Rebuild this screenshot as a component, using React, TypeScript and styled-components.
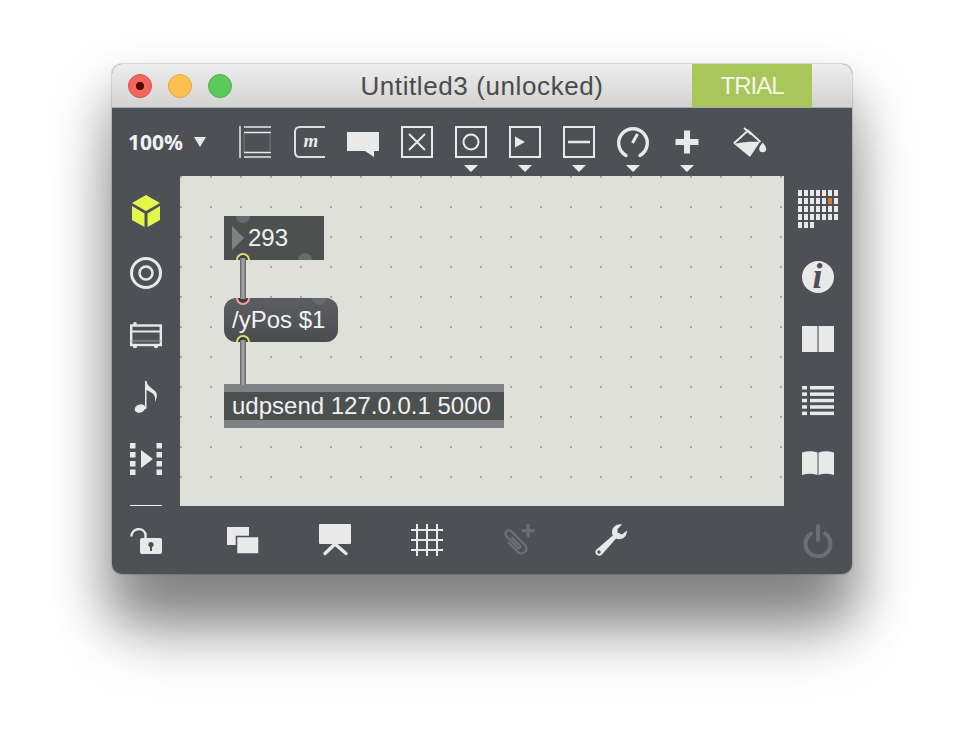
import styled, { createGlobalStyle } from "styled-components";

const Page = createGlobalStyle`
  html, body { margin: 0; background: #fff; }
  body { width: 964px; height: 734px; overflow: hidden; }
`;

const ICON = "#e9e9e9";
const DIM = "#6b6e72";
const PANEL = "#4d5055";

const Window = styled.div`
  width: 740px;
  height: 510px;
  margin: 64px 0 0 112px;
  display: flex;
  flex-direction: column;
  border-radius: 10px;
  overflow: hidden;
  background: ${PANEL};
  box-shadow: 0 68px 60px -10px rgba(0, 0, 0, 0.3), 0 34px 50px 10px rgba(0, 0, 0, 0.28),
    0 0 1px 1px rgba(0, 0, 0, 0.14);
`;

const TitleBar = styled.div`
  height: 44px;
  box-sizing: border-box;
  display: grid;
  grid-template-columns: 1fr auto 1fr;
  align-items: center;
  background: linear-gradient(#ededed, #d3d3d3);
  border-bottom: 1px solid #ababab;
`;

const Lights = styled.div`
  display: flex;
  gap: 16px;
  padding-left: 16px;
`;

const Light = styled.div<{ $fill: string; $edge: string }>`
  width: 24px;
  height: 24px;
  box-sizing: border-box;
  border-radius: 50%;
  background: ${(p) => p.$fill};
  border: 1px solid ${(p) => p.$edge};
  display: flex;
  align-items: center;
  justify-content: center;
`;

const CloseDot = styled.div`
  width: 8px;
  height: 8px;
  border-radius: 50%;
  background: #4f0a06;
`;

const Title = styled.div`
  margin-top: 1px;
  font: 26px "Liberation Sans", Arial, sans-serif;
  letter-spacing: 0.6px;
  color: #4b4b4b;
  white-space: nowrap;
`;

const TrialBadge = styled.div`
  justify-self: end;
  align-self: start;
  width: 120px;
  height: 43px;
  margin-right: 40px;
  background: #a8c65a;
  color: #f4f7e6;
  font: 24px "Liberation Sans", Arial, sans-serif;
  letter-spacing: -1px;
  line-height: 43px;
  text-align: center;
`;

const Toolbar = styled.div`
  height: 68px;
  box-sizing: border-box;
  display: flex;
  align-items: flex-start;
  padding: 18px 0 0 16px;
`;

const Zoom = styled.div`
  display: flex;
  align-items: center;
  height: 32px;
  width: 111px;
  gap: 11px;
  font: bold 21px "Open Sans", "Liberation Sans", sans-serif;
  letter-spacing: 0;
  color: #f1f1f1;
`;

const ZoomCaret = styled.div`
  width: 0;
  height: 0;
  border-left: 6px solid transparent;
  border-right: 6px solid transparent;
  border-top: 10px solid #e9e9e9;
`;

const Tools = styled.div`
  display: flex;
  gap: 22px;
`;

const Tool = styled.div`
  display: flex;
  flex-direction: column;
  align-items: center;
  width: 32px;
  gap: 7px;
`;

const BucketTool = styled(Tool)`
  margin-left: 8px;
`;

const MenuCaret = styled.div`
  width: 0;
  height: 0;
  border-left: 7px solid transparent;
  border-right: 7px solid transparent;
  border-top: 7px solid #ededed;
`;

const Middle = styled.div`
  height: 330px;
  display: flex;
`;

const Rail = styled.div<{ $top: number }>`
  width: 68px;
  flex: none;
  box-sizing: border-box;
  padding-top: ${(p) => p.$top}px;
  display: flex;
  flex-direction: column;
  align-items: center;
  gap: 30px;
`;

const Slot = styled.div`
  width: 32px;
  height: 32px;
  display: flex;
  align-items: center;
  justify-content: center;
`;

const GridSlot = styled.div`
  width: 40px;
  height: 38px;
  margin-bottom: 3px;
`;

const RailRule = styled.div`
  width: 32px;
  height: 1px;
  flex: none;
  margin-top: auto;
  background: #f0f0f0;
`;

const Canvas = styled.div`
  position: relative;
  width: 604px;
  flex: none;
  background-color: #dfe0da;
  background-image: radial-gradient(circle at 1px 1px, #a9aaa4 1px, transparent 1.4px);
  background-size: 30px 30px;
`;

const Box = styled.div<{ $x: number; $y: number; $w: number; $round?: boolean }>`
  position: absolute;
  left: ${(p) => p.$x}px;
  top: ${(p) => p.$y}px;
  width: ${(p) => p.$w}px;
  height: 44px;
  box-sizing: border-box;
  overflow: hidden;
  display: flex;
  align-items: center;
  padding-left: 8px;
  background: ${(p) => (p.$round ? "linear-gradient(#5d5e63, #4a4d4d)" : "#4c504e")};
  border-radius: ${(p) => (p.$round ? "12px" : "0")};
  font: 24px "Liberation Sans", Arial, sans-serif;
  color: #f1f2f4;
  white-space: nowrap;
`;

const ObjectBox = styled(Box)`
  border-top: 8px solid #808185;
  border-bottom: 8px solid #808185;
`;

const NumberArrow = styled.div`
  width: 0;
  height: 0;
  margin-right: 4px;
  border-top: 12px solid transparent;
  border-bottom: 12px solid transparent;
  border-left: 12px solid #7e8184;
`;

const Bump = styled.div<{ $x: number; $bottom?: boolean }>`
  position: absolute;
  left: ${(p) => p.$x}px;
  ${(p) => (p.$bottom ? "bottom: -7px;" : "top: -7px;")}
  width: 14px;
  height: 14px;
  border-radius: 50%;
  background: #686b6d;
`;

const Port = styled.div<{ $out?: boolean; $inset?: number }>`
  position: absolute;
  left: 12px;
  ${(p) => (p.$out ? "bottom" : "top")}: ${(p) => -7 - (p.$inset ?? 0)}px;
  width: 14px;
  height: 14px;
  box-sizing: border-box;
  border-radius: 50%;
  background: #3c3f3f;
  border: 2px solid ${(p) => (p.$out ? "#dfe06e" : "#f0a594")};
`;

const Wire = styled.div<{ $y: number; $h: number }>`
  position: absolute;
  left: 60px;
  top: ${(p) => p.$y}px;
  width: 6px;
  height: ${(p) => p.$h}px;
  background: linear-gradient(to right, #5a5c5c, #9f9f9f 35%, #9f9f9f 65%, #5a5c5c);
`;

const BottomBar = styled.div`
  height: 68px;
  box-sizing: border-box;
  display: flex;
  align-items: flex-start;
  gap: 60px;
  padding: 18px 18px 0;
`;

const LockSlot = styled(Slot)`
  margin-right: 5px;
`;

const PowerSlot = styled(Slot)`
  margin-left: auto;
`;

const Glyph = styled.svg`
  display: block;
  overflow: visible;
  flex: none;
`;

const OutlineBox = () => <rect x={1} y={1} width={30} height={30} fill="none" stroke={ICON} strokeWidth={2} />;

const Icon32 = ({ w = 32, h = 32, children }: { w?: number; h?: number; children: React.ReactNode }) => (
  <Glyph width={w} height={h} viewBox={`0 0 ${w} ${h}`}>
    {children}
  </Glyph>
);

const gridCells = Array.from({ length: 31 }, (_, i) => ({ col: i % 7, row: Math.floor(i / 7) }));

function Toolbox() {
  return (
    <Tools>
      <Tool>
        <Icon32>
          <path d="M1 0V32" stroke={ICON} strokeWidth={1.5} />
          <path d="M5 1H32M5 6.500H32M5 26.500H32M5 31H32" stroke={ICON} strokeWidth={1.7} />
          <path d="M5 7V26M31 7V26" stroke="#77797d" strokeWidth={1} />
        </Icon32>
      </Tool>
      <Tool>
        <Icon32>
          <path d="M32 1H7Q2 1 2 6V26Q2 31 7 31H32" fill="none" stroke="#dedede" strokeWidth={2} />
          <text x={10.500} y={21} fontFamily="Liberation Serif" fontWeight="bold" fontStyle="italic" fontSize={19} fill={ICON}>
            m
          </text>
        </Icon32>
      </Tool>
      <Tool>
        <Icon32>
          <path d="M0 6H32V25H27V31L18 25H0Z" fill={ICON} />
        </Icon32>
      </Tool>
      <Tool>
        <Icon32>
          <OutlineBox />
          <path d="M8 8L24 24M24 8L8 24" stroke={ICON} strokeWidth={2} />
        </Icon32>
      </Tool>
      <Tool>
        <Icon32>
          <OutlineBox />
          <circle cx={16} cy={16} r={7.500} fill="none" stroke={ICON} strokeWidth={2} />
        </Icon32>
        <MenuCaret />
      </Tool>
      <Tool>
        <Icon32>
          <OutlineBox />
          <path d="M6 10.500L16 16L6 21.500Z" fill={ICON} />
        </Icon32>
        <MenuCaret />
      </Tool>
      <Tool>
        <Icon32>
          <OutlineBox />
          <path d="M5 16H27" stroke={ICON} strokeWidth={2.500} />
        </Icon32>
        <MenuCaret />
      </Tool>
      <Tool>
        <Icon32>
          <path d="M9 29.500A14.300 14.300 0 1 1 23 29.500" fill="none" stroke={ICON} strokeWidth={3.400} strokeLinecap="round" />
          <path d="M15.500 17L20.500 8" stroke={ICON} strokeWidth={3} />
        </Icon32>
        <MenuCaret />
      </Tool>
      <Tool>
        <Icon32>
          <path d="M16 4.500V27.500M4.500 16H27.500" stroke={ICON} strokeWidth={6} />
        </Icon32>
        <MenuCaret />
      </Tool>
      <BucketTool>
        <Icon32>
          <path d="M0.500 17.500L3 17.500C11 15.500 19 15.500 27 15.800L17 31Z" fill={ICON} />
          <path d="M0.800 17.500L15 4.500L27.500 16" fill="none" stroke={ICON} strokeWidth={2} />
          <path d="M11 2L18.500 8.500" stroke={ICON} strokeWidth={2} />
          <path d="M29.700 16.500C29.700 16.500 26.200 20.500 26.200 22.700A3.500 3.500 0 0 0 33.200 22.700C33.200 20.500 29.700 16.500 29.700 16.500Z" fill={ICON} />
        </Icon32>
      </BucketTool>
    </Tools>
  );
}

function LeftRail() {
  return (
    <Rail $top={19}>
      <Slot>
        <Icon32>
          <path d="M16 0L30 8L16 16L2 8ZM2 11L14.500 18.500V32L2 25ZM30 11L17.500 18.500V32L30 25Z" fill="#e4f74c" />
        </Icon32>
      </Slot>
      <Slot>
        <Icon32>
          <circle cx={16} cy={16} r={14.500} fill="none" stroke={ICON} strokeWidth={3} />
          <circle cx={16} cy={16} r={6.500} fill="none" stroke={ICON} strokeWidth={2.500} />
        </Icon32>
      </Slot>
      <Slot>
        <Icon32 h={26}>
          <rect x={1.200} y={3.500} width={29.600} height={19.500} fill="none" stroke={ICON} strokeWidth={2.400} />
          <path d="M1 9.500H31" stroke={ICON} strokeWidth={2} />
          <path d="M1 19H31" stroke="#9a9c9e" strokeWidth={1} />
          <circle cx={5} cy={1.800} r={1.800} fill={ICON} />
          <circle cx={5} cy={24} r={2.200} fill={ICON} />
          <circle cx={26} cy={24} r={2.200} fill={ICON} />
        </Icon32>
      </Slot>
      <Slot>
        <Icon32>
          <ellipse cx={10} cy={27.500} rx={5.500} ry={4} transform="rotate(-22 10 27.500)" fill={ICON} />
          <path d="M15 28V0H16.500C17 5 22 7 25 10C27.500 12.500 27.500 16 25 21C25.500 17 25 14 22 12C20 10.500 18 9.500 16.500 9V28Z" fill={ICON} />
        </Icon32>
      </Slot>
      <Slot>
        <Icon32>
          <path d="M0 0h5.500v5.500h-5.500zM0 9h5.500v5.500h-5.500zM0 18h5.500v5.500h-5.500zM0 26.500h5.500v5.500h-5.500z" fill={ICON} />
          <path d="M26.500 0h5.500v5.500h-5.500zM26.500 9h5.500v5.500h-5.500zM26.500 18h5.500v5.500h-5.500zM26.500 26.500h5.500v5.500h-5.500z" fill={ICON} />
          <path d="M11 7L23 16L11 25Z" fill={ICON} />
        </Icon32>
      </Slot>
      <RailRule />
    </Rail>
  );
}

function RightRail() {
  return (
    <Rail $top={14}>
      <GridSlot>
        <Icon32 w={40} h={38}>
          {gridCells.map(({ col, row }) => (
            <rect
              key={`${col}-${row}`}
              x={col * 6}
              y={row * 8}
              width={4}
              height={6}
              fill={col === 5 && row === 1 ? "#d9792b" : ICON}
            />
          ))}
        </Icon32>
      </GridSlot>
      <Slot>
        <Icon32>
          <circle cx={16} cy={16} r={16} fill={ICON} />
          <text
            x={15.500}
            y={27}
            textAnchor="middle"
            fontFamily="Liberation Serif"
            fontWeight="bold"
            fontStyle="italic"
            fontSize={36}
            fill={PANEL}
          >
            i
          </text>
        </Icon32>
      </Slot>
      <Slot>
        <Icon32 h={26}>
          <rect width={15.500} height={26} fill={ICON} />
          <rect x={16.500} width={15.500} height={26} fill={ICON} />
          <rect x={15.500} width={1.500} height={26} fill="#8d8f92" />
        </Icon32>
      </Slot>
      <Slot>
        <Icon32 h={30}>
          {[0, 6.400, 12.800, 19.200, 25.600].map((y) => (
            <g key={y}>
              <rect y={y} width={5} height={3.500} fill={ICON} />
              <rect x={8} y={y} width={24} height={3.500} fill={ICON} />
            </g>
          ))}
        </Icon32>
      </Slot>
      <Slot>
        <Icon32 h={24}>
          <path d="M0 1.500Q8 -1 15.500 1.500V24Q8 21.500 0 24Z" fill={ICON} />
          <path d="M16.500 1.500Q24 -1 32 1.500V24Q24 21.500 16.500 24Z" fill={ICON} />
        </Icon32>
      </Slot>
    </Rail>
  );
}

function Patch() {
  return (
    <Canvas>
      <Box $x={44} $y={40} $w={100}>
        <Bump $x={12} />
        <Bump $x={74} $bottom />
        <Port $out />
        <NumberArrow />
        293
      </Box>
      <Box $x={44} $y={122} $w={114} $round>
        <Bump $x={88} />
        <Port />
        <Port $out />
        /yPos $1
      </Box>
      <ObjectBox $x={44} $y={208} $w={280}>
        <Port $inset={8} />
        udpsend 127.0.0.1 5000
      </ObjectBox>
      <Wire $y={82} $h={41} />
      <Wire $y={164} $h={45} />
    </Canvas>
  );
}

function Footer() {
  return (
    <BottomBar>
      <LockSlot>
        <Icon32 h={28}>
          <path d="M1.500 10.500A7.200 7.200 0 0 1 15.500 8V13" fill="none" stroke={ICON} strokeWidth={2.400} />
          <rect x={10} y={12} width={22} height={16} rx={2} fill={ICON} />
          <circle cx={21} cy={18.500} r={2.600} fill={PANEL} />
          <path d="M21 19V25" stroke={PANEL} strokeWidth={2} />
        </Icon32>
      </LockSlot>
      <Slot>
        <Icon32 h={27}>
          <rect width={22} height={18} fill={ICON} />
          <rect x={9.500} y={9.500} width={22.500} height={17.500} fill={ICON} stroke={PANEL} strokeWidth={1.500} />
        </Icon32>
      </Slot>
      <Slot>
        <Icon32>
          <rect width={32} height={20} rx={1} fill={ICON} />
          <path d="M16 20L6 29.500M16 20L27 29.500" stroke={ICON} strokeWidth={3.400} strokeLinecap="round" />
        </Icon32>
      </Slot>
      <Slot>
        <Icon32>
          <path d="M6 0V32M16 0V32M26 0V32M0 6H32M0 16H32M0 26H32" stroke={ICON} strokeWidth={2} />
        </Icon32>
      </Slot>
      <Slot>
        <Icon32>
          <path d="M25 0V13.500M18.500 6.800H32" stroke={DIM} strokeWidth={3} />
          <path
            transform="translate(12 18) rotate(-45)"
            d="M-5 -5V9A5 5 0 0 0 5 9V-10A3.500 3.500 0 0 0 -2 -10V6A1.500 1.500 0 0 0 1 6V-6"
            fill="none"
            stroke={DIM}
            strokeWidth={2.400}
          />
        </Icon32>
      </Slot>
      <Slot>
        <Icon32>
          <path
            d="M27 0.500C22 -0.500 17 3 17 8C17 9.500 17.300 10.500 17.800 11.500L1.500 25.500C-0.500 27.500 0.500 30 2 31C3.500 32 5.500 32 7 30.500L21 14.500C22 15 23 15.200 24 15.200C29 15.200 32.500 11 31.800 6.500L27 10.500L22.500 8.500L22.500 5Z"
            fill={ICON}
          />
          <circle cx={4} cy={28} r={1.700} fill={PANEL} />
        </Icon32>
      </Slot>
      <PowerSlot>
        <Icon32>
          <path d="M9 9.500A12.500 12.500 0 1 0 23 9.500" fill="none" stroke={DIM} strokeWidth={4} strokeLinecap="round" />
          <path d="M16 2V16" stroke={DIM} strokeWidth={4} strokeLinecap="round" />
        </Icon32>
      </PowerSlot>
    </BottomBar>
  );
}

export default function App() {
  return (
    <>
      <Page />
      <Window>
        <TitleBar>
          <Lights>
            <Light $fill="#f4665b" $edge="#dc4f45">
              <CloseDot />
            </Light>
            <Light $fill="#fbc04d" $edge="#e4a73c">
              {null}
            </Light>
            <Light $fill="#5dc95a" $edge="#4cae48">
              {null}
            </Light>
          </Lights>
          <Title>Untitled3 (unlocked)</Title>
          <TrialBadge>TRIAL</TrialBadge>
        </TitleBar>
        <Toolbar>
          <Zoom>
            100%
            <ZoomCaret />
          </Zoom>
          <Toolbox />
        </Toolbar>
        <Middle>
          <LeftRail />
          <Patch />
          <RightRail />
        </Middle>
        <Footer />
      </Window>
    </>
  );
}
